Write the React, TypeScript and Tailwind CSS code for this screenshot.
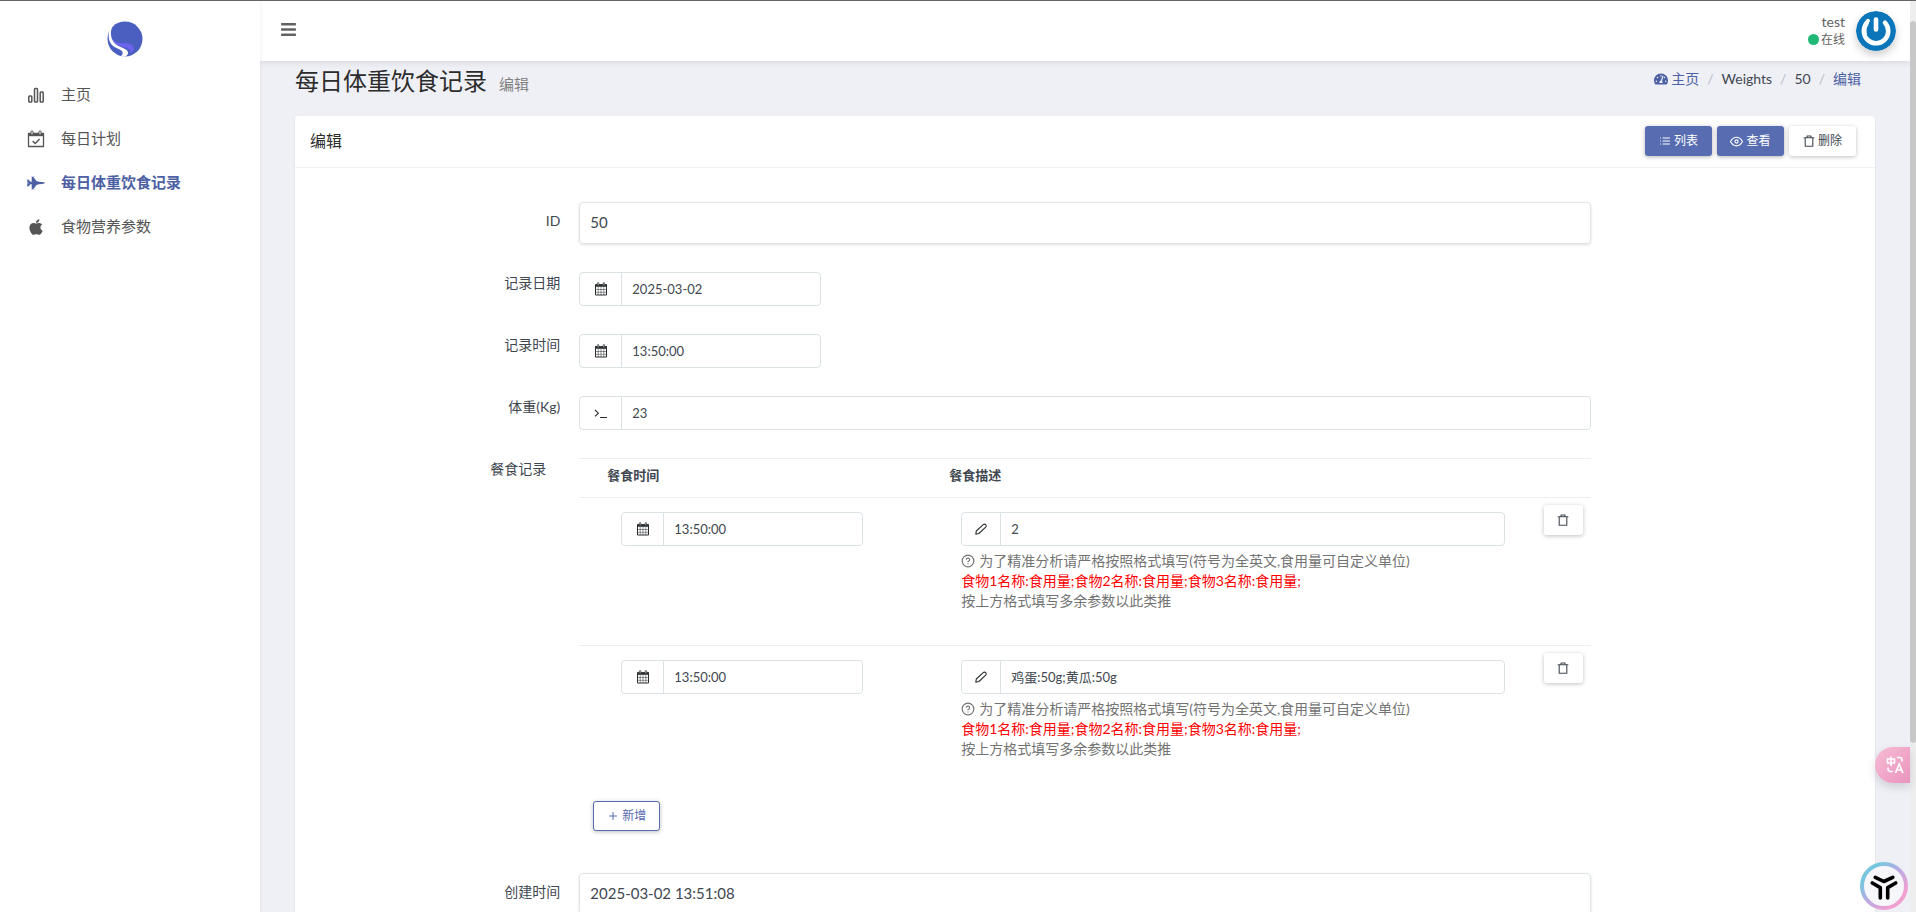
import { useId, useState } from 'react';
import type { ReactNode } from 'react';
import { FaApple, FaBars, FaFighterJet, FaTachometerAlt } from 'react-icons/fa';
import { FiEye, FiHelpCircle, FiList, FiPlus } from 'react-icons/fi';

type Meal = {
  id: number;
  time: string;
  desc: string;
};

function BarsIcon() {
  return (
    <svg className="w-[18px] h-[18px]" viewBox="0 0 18 18" fill="none" stroke="currentColor" strokeWidth={1.5}>
      <rect x="1.8" y="10" width="3" height="6" rx="0.8" />
      <rect x="7.5" y="2.5" width="3" height="13.5" rx="0.8" />
      <rect x="13.2" y="6" width="3" height="10" rx="0.8" />
    </svg>
  );
}

function CalendarCheckIcon() {
  return (
    <svg className="w-[18px] h-[18px]" viewBox="0 0 18 18" fill="none" stroke="currentColor">
      <path d="M1.5 3.5h15v13h-15z" strokeWidth={1.3} strokeLinejoin="round" />
      <path d="M1.5 3.2h15v3h-15z" fill="currentColor" stroke="none" />
      <rect x="4" y="0.8" width="2" height="4" rx="1" fill="#fff" strokeWidth={1} />
      <rect x="12" y="0.8" width="2" height="4" rx="1" fill="#fff" strokeWidth={1} />
      <path d="M5.6 11l2.6 2.5 4.4-4.6" strokeWidth={1.4} />
    </svg>
  );
}

function CalendarIcon() {
  return (
    <svg className="w-[14px] h-[14px]" viewBox="0 0 14 14" fill="none" stroke="currentColor">
      <path d="M1.5 3h11v10h-11z" strokeWidth={1} />
      <path d="M1 2.2h12v2.6H1z" fill="currentColor" stroke="none" />
      <path d="M4.2 5v8M7 5v8M9.8 5v8M1.5 7.5h11M1.5 10.300h11" strokeWidth={0.5} />
      <rect x="3.4" y="0.6" width="1.4" height="2.8" rx="0.7" fill="#fff" strokeWidth={0.8} />
      <rect x="9.2" y="0.6" width="1.4" height="2.8" rx="0.7" fill="#fff" strokeWidth={0.8} />
    </svg>
  );
}

function TerminalIcon() {
  return (
    <svg className="w-[14px] h-[14px]" viewBox="0 0 14 14" fill="none" stroke="currentColor" strokeWidth={1.1}>
      <path d="M1 4l3.4 3.2L1 10.4M6 11.5h7" />
    </svg>
  );
}

function PencilIcon() {
  return (
    <svg className="w-[14px] h-[14px]" viewBox="0 0 14 14" fill="none" stroke="currentColor" strokeWidth={1.1} strokeLinejoin="round">
      <path d="M1.8 12.2l.5-3.2 6.9-6.400c.7-.7 1.800-.7 2.500 0s.7 1.800 0 2.500L4.9 11.500z" />
    </svg>
  );
}

function TrashIcon() {
  return (
    <svg className="w-3 h-3" viewBox="0 0 12 12" fill="none" stroke="currentColor" strokeWidth={1.1}>
      <path d="M.7 2.8h10.6M4 2.6V1h4v1.6M2.2 3v8.3h7.6V3" strokeLinejoin="round" />
    </svg>
  );
}

function Logo() {
  return (
    <svg className="w-[36px] h-[36px]" viewBox="0 0 36 36">
      <circle cx="18" cy="18" r="17.5" fill="#4b5fc1" />
      <path d="M4.500 17.500c4 5 9 4.500 14 4.800 5 .3 8.500 2 8.500 5 0 2-1.500 3.700-3 4.700.2-3.500-3-5-7-5.800-6-1.200-11-3-12.500-8.700z" fill="#6d62ec" />
      <path d="M6 4C.8 9 0 18.500 5 24c3.500 3.700 9.500 4 10.500 7 .5 1.500-.3 3-1.500 4.300 1.500.4 3.500.4 4.500.2 1.800-1 2.800-2.600 2.500-4.200-.8-3.800-6.500-4.300-10.500-6.800C3.500 20.500 2.300 11 6 4z" fill="#fff" />
    </svg>
  );
}

function Avatar() {
  return (
    <svg className="w-10 h-10 rounded-full shadow-[0_4px_8px_rgba(0,0,0,0.2)]" viewBox="0 0 40 40">
      <circle cx="20" cy="20" r="20" fill="#0a76b9" />
      <path
        d="M10.500 12.500a12.200 12.200 0 1 0 18.500-.7"
        fill="none"
        stroke="#fff"
        strokeWidth="4.600"
        strokeLinecap="round"
      />
      <path d="M12 9.800c-3 3.500-4.400 8-3.300 12.200" fill="none" stroke="#fff" strokeWidth="4" strokeLinecap="round" />
      <path d="M20 8.500v10" stroke="#fff" strokeWidth="4.600" strokeLinecap="round" />
    </svg>
  );
}

const menu = [
  { title: '主页', icon: <BarsIcon />, active: false },
  { title: '每日计划', icon: <CalendarCheckIcon />, active: false },
  { title: '每日体重饮食记录', icon: <FaFighterJet className="w-[18px] h-[18px]" />, active: true },
  { title: '食物营养参数', icon: <FaApple className="w-[18px] h-[18px]" />, active: false },
];

function Sidebar() {
  return (
    <aside className="w-[260px] shrink-0 bg-white shadow-[0_0_4px_rgba(0,0,0,0.08)] z-10">
      <a href="#" className="flex justify-center pt-5 pr-[11px] pb-4" aria-label="Home">
        <Logo />
      </a>
      <nav>
        {menu.map((item) => (
          <a
            key={item.title}
            href="#"
            className={
              item.active
                ? 'flex items-center h-11 pl-[27px] gap-4 text-[15px] font-bold text-[#4c60a3]'
                : 'flex items-center h-11 pl-[27px] gap-4 text-[15px] text-[#555]'
            }
          >
            <span className="w-[18px] flex justify-center">{item.icon}</span>
            {item.title}
          </a>
        ))}
      </nav>
    </aside>
  );
}

function Header() {
  return (
    <header className="h-[60px] shrink-0 flex items-center justify-between bg-white pl-5 pr-[14px] shadow-[0_2px_6px_rgba(0,0,0,0.09)]">
      <button className="p-0 pb-1 text-[#626262]" aria-label="Toggle menu">
        <FaBars className="w-[17px] h-[17px]" />
      </button>
      <div className="flex items-center gap-[11px]">
        <div className="pb-[2px] text-right text-[#626262]">
          <div className="text-sm leading-[19px]">test</div>
          <div className="flex items-center gap-[2px] text-xs leading-[18px]">
            <span className="w-[11px] h-[11px] rounded-full bg-[#21b978]" />
            在线
          </div>
        </div>
        <Avatar />
      </div>
    </header>
  );
}

function FormRow({ label, htmlFor, labelClass, children }: {
  label: string;
  htmlFor?: string;
  labelClass?: string;
  children: ReactNode;
}) {
  return (
    <div className="flex mb-7">
      <label
        htmlFor={htmlFor}
        className={`w-1/6 shrink-0 text-right text-sm leading-[22px] text-[#414750] ${labelClass ?? 'pr-2'}`}
      >
        {label}
      </label>
      <div className="w-2/3 pl-[11px] pr-[11px]">{children}</div>
    </div>
  );
}

function DisplayField({ label, value }: { label: string; value: string }) {
  const id = useId();
  return (
    <FormRow label={label} htmlFor={id} labelClass="pr-2 pt-2">
      <input
        id={id}
        readOnly
        value={value}
        className="block w-full h-[42px] px-[10px] pb-[2px] text-[15px] rounded border border-[#dfe5e8] shadow-[0_1px_3px_rgba(0,0,0,0.12)] outline-none"
      />
    </FormRow>
  );
}

function IconInput({ id, icon, initial, width, label, narrow }: {
  id?: string;
  icon: ReactNode;
  initial: string;
  width: string;
  label?: string;
  narrow?: boolean;
}) {
  const [value, setValue] = useState(initial);
  return (
    <div className={`flex h-[34px] rounded border border-[#dbe2e6] bg-white ${width}`}>
      <span
        className={`flex items-center justify-center shrink-0 border-r border-[#dbe2e6] text-[#2a2e30] ${narrow ? 'w-[39px]' : 'w-[42px]'}`}
      >
        {icon}
      </span>
      <input
        id={id}
        aria-label={label}
        value={value}
        onChange={(e) => setValue(e.target.value)}
        className="w-full min-w-0 px-[10px] text-[13px] bg-transparent outline-none"
      />
    </div>
  );
}

function MealRow({ meal, onRemove }: { meal: Meal; onRemove: () => void }) {
  return (
    <tr className="h-[148px] border-t border-[#ebeef2] align-top">
      <td className="pt-[14px] pl-[42px]">
        <IconInput icon={<CalendarIcon />} initial={meal.time} width="w-[242px]" label="餐食时间" />
      </td>
      <td className="pt-[14px] pl-[38px] pr-5">
        <IconInput icon={<PencilIcon />} initial={meal.desc} width="w-full" label="餐食描述" narrow />
        <div className="pt-[5px] text-sm leading-5 text-[#737373]">
          <FiHelpCircle className="inline w-[14px] h-[14px] mr-1 mb-[3px]" />
          为了精准分析请严格按照格式填写(符号为全英文,食用量可自定义单位)
          <br />
          <span className="text-[#f00]">食物1名称:食用量;食物2名称:食用量;食物3名称:食用量;</span>
          <br />
          按上方格式填写多余参数以此类推
        </div>
      </td>
      <td className="pt-[7px]">
        <button
          type="button"
          onClick={onRemove}
          aria-label="删除"
          className="flex items-center justify-center ml-[19px] w-[39px] h-[30px] rounded-[3px] bg-white text-[#414750] shadow-[0_1px_4px_rgba(0,0,0,0.25)]"
        >
          <TrashIcon />
        </button>
      </td>
    </tr>
  );
}

function MealTable() {
  const [meals, setMeals] = useState<Meal[]>([
    { id: 1, time: '13:50:00', desc: '2' },
    { id: 2, time: '13:50:00', desc: '鸡蛋:50g;黄瓜:50g' },
  ]);

  const addMeal = () => {
    setMeals([...meals, { id: Date.now(), time: '', desc: '' }]);
  };

  return (
    <div className="pb-[14px]">
      <table className="w-full table-fixed border-collapse">
        <thead>
          <tr className="h-[39px] border-t border-[#ebeef2] text-left text-[13px] leading-5">
            <th className="w-[34%] pl-7 pb-[6px] font-bold">餐食时间</th>
            <th className="pl-[26px] pb-[6px] font-bold">餐食描述</th>
            <th className="w-[66px]" />
          </tr>
        </thead>
        <tbody>
          {meals.map((meal) => (
            <MealRow
              key={meal.id}
              meal={meal}
              onRemove={() => setMeals(meals.filter((m) => m.id !== meal.id))}
            />
          ))}
        </tbody>
      </table>
      <button
        type="button"
        onClick={addMeal}
        className="flex items-center justify-center gap-[3px] mt-[7px] ml-[14px] w-[67px] h-[30px] rounded-[3px] border border-[#586cb1] bg-white text-xs text-[#586cb1] shadow-[0_1px_4px_rgba(0,0,0,0.25)]"
      >
        <FiPlus className="w-3 h-3" />
        新增
      </button>
    </div>
  );
}

function Tools() {
  return (
    <div className="flex gap-[5px] text-xs">
      <a href="#" className="flex items-center justify-center gap-[3px] w-[67px] h-[30px] rounded-[3px] bg-[#586cb1] text-white shadow-[0_1px_4px_rgba(0,0,0,0.3)]">
        <FiList className="w-3 h-3" />
        列表
      </a>
      <a href="#" className="flex items-center justify-center gap-[3px] w-[67px] h-[30px] rounded-[3px] bg-[#586cb1] text-white shadow-[0_1px_4px_rgba(0,0,0,0.3)]">
        <FiEye className="w-[13px] h-[13px]" />
        查看
      </a>
      <button type="button" className="flex items-center justify-center gap-[3px] w-[67px] h-[30px] rounded-[3px] bg-white text-[#414750] shadow-[0_1px_4px_rgba(0,0,0,0.25)]">
        <TrashIcon />
        删除
      </button>
    </div>
  );
}

function FloatingWidgets() {
  return (
    <>
      <button
        className="fixed right-[6px] bottom-[129px] flex items-center pl-[11px] w-[35px] h-9 rounded-l-full bg-linear-to-br from-[#f6bcd6] to-[#ea94bd] shadow-[0_4px_10px_rgba(0,0,0,0.14)]"
        aria-label="翻译"
      >
        <svg className="w-[18px] h-[18px]" viewBox="0 0 18 18" fill="none" stroke="#fff" strokeWidth={1.6}>
          <path d="M1.500 3h7v4h-7zM5 .5v9.500" />
          <path d="M11 1.500h2.500a2.500 2.500 0 0 1 2.500 2.500V5.500M2 11.500v1.500a2.500 2.500 0 0 0 2.500 2.500H7" />
          <path d="M9.500 17l3.700-9 3.700 9M10.800 14h4.800" />
        </svg>
      </button>
      <button className="fixed right-2 bottom-[2px] w-12 h-12" aria-label="助手">
        <svg className="w-12 h-12" viewBox="0 0 48 48" fill="none">
          <defs>
            <linearGradient id="ring" x1="0" y1="0" x2="1" y2="1">
              <stop offset="0.2" stopColor="#78c6de" />
              <stop offset="0.5" stopColor="#bda9e4" />
              <stop offset="0.8" stopColor="#f0a1cf" />
            </linearGradient>
          </defs>
          <circle cx="24" cy="24" r="22" fill="#f7f7fb" stroke="url(#ring)" strokeWidth="4" />
          <g stroke="#000" strokeWidth="3.6" strokeLinecap="round" strokeLinejoin="round">
            <path d="M15.300 15.300l8.500 4.200 9-4.200" />
            <path d="M12.300 21l8 4.600v10.400" />
            <path d="M35.700 21l-8 4.600v10.400" />
          </g>
        </svg>
      </button>
    </>
  );
}

export default function App() {
  return (
    <div className="flex h-screen overflow-hidden border-t border-[#666466] bg-[#eff0f6] font-[Lato,'Noto_Sans_CJK_SC',sans-serif] text-sm text-[#414750]">
      <Sidebar />

      <div className="flex-1 min-w-0 flex flex-col">
        <Header />

        <main className="flex-1 min-h-0 overflow-hidden px-[35px]">
          <div className="flex items-start justify-between h-[55px]">
            <h1 className="pt-1 text-2xl leading-8 text-[#2c2c2c]">
              每日体重饮食记录
              <small className="ml-3 text-[15px] text-[#808080]">编辑</small>
            </h1>
            <ol className="flex items-center pt-2 pr-[14px] text-sm leading-5">
              <li>
                <a href="#" className="flex items-center gap-[3px] text-[#4c60a3]">
                  <FaTachometerAlt className="w-[14px] h-[14px]" />
                  主页
                </a>
              </li>
              <li className="px-2 text-[#b8bcc6]">/</li>
              <li>Weights</li>
              <li className="px-2 text-[#b8bcc6]">/</li>
              <li>50</li>
              <li className="px-2 text-[#b8bcc6]">/</li>
              <li className="text-[#4c60a3]">编辑</li>
            </ol>
          </div>

          <section className="rounded-t bg-white shadow-[0_1px_3px_rgba(0,0,0,0.08)]">
            <div className="flex items-center justify-between h-[52px] pl-[15px] pr-[19px] pb-[1px] border-b border-[#f0f1f5]">
              <h2 className="text-base text-[#2c2c2c]">编辑</h2>
              <Tools />
            </div>

            <form className="px-[15px] pt-[34px]" onSubmit={(e) => e.preventDefault()}>
              <DisplayField label="ID" value="50" />
              <FormRow label="记录日期" htmlFor="date">
                <IconInput id="date" icon={<CalendarIcon />} initial="2025-03-02" width="w-[242px]" />
              </FormRow>
              <FormRow label="记录时间" htmlFor="time">
                <IconInput id="time" icon={<CalendarIcon />} initial="13:50:00" width="w-[242px]" />
              </FormRow>
              <FormRow label="体重(Kg)" htmlFor="weight">
                <IconInput id="weight" icon={<TerminalIcon />} initial="23" width="w-full" />
              </FormRow>
              <FormRow label="餐食记录" labelClass="pr-[22px]">
                <MealTable />
              </FormRow>
              <DisplayField label="创建时间" value="2025-03-02 13:51:08" />
            </form>
          </section>
        </main>
      </div>

      {/* scroll indicator */}
      <div className="w-[6px] shrink-0 pt-5 bg-[#eee]">
        <div className="h-[81%] rounded-full bg-[#c8c8c8]" />
      </div>

      <FloatingWidgets />
    </div>
  );
}
